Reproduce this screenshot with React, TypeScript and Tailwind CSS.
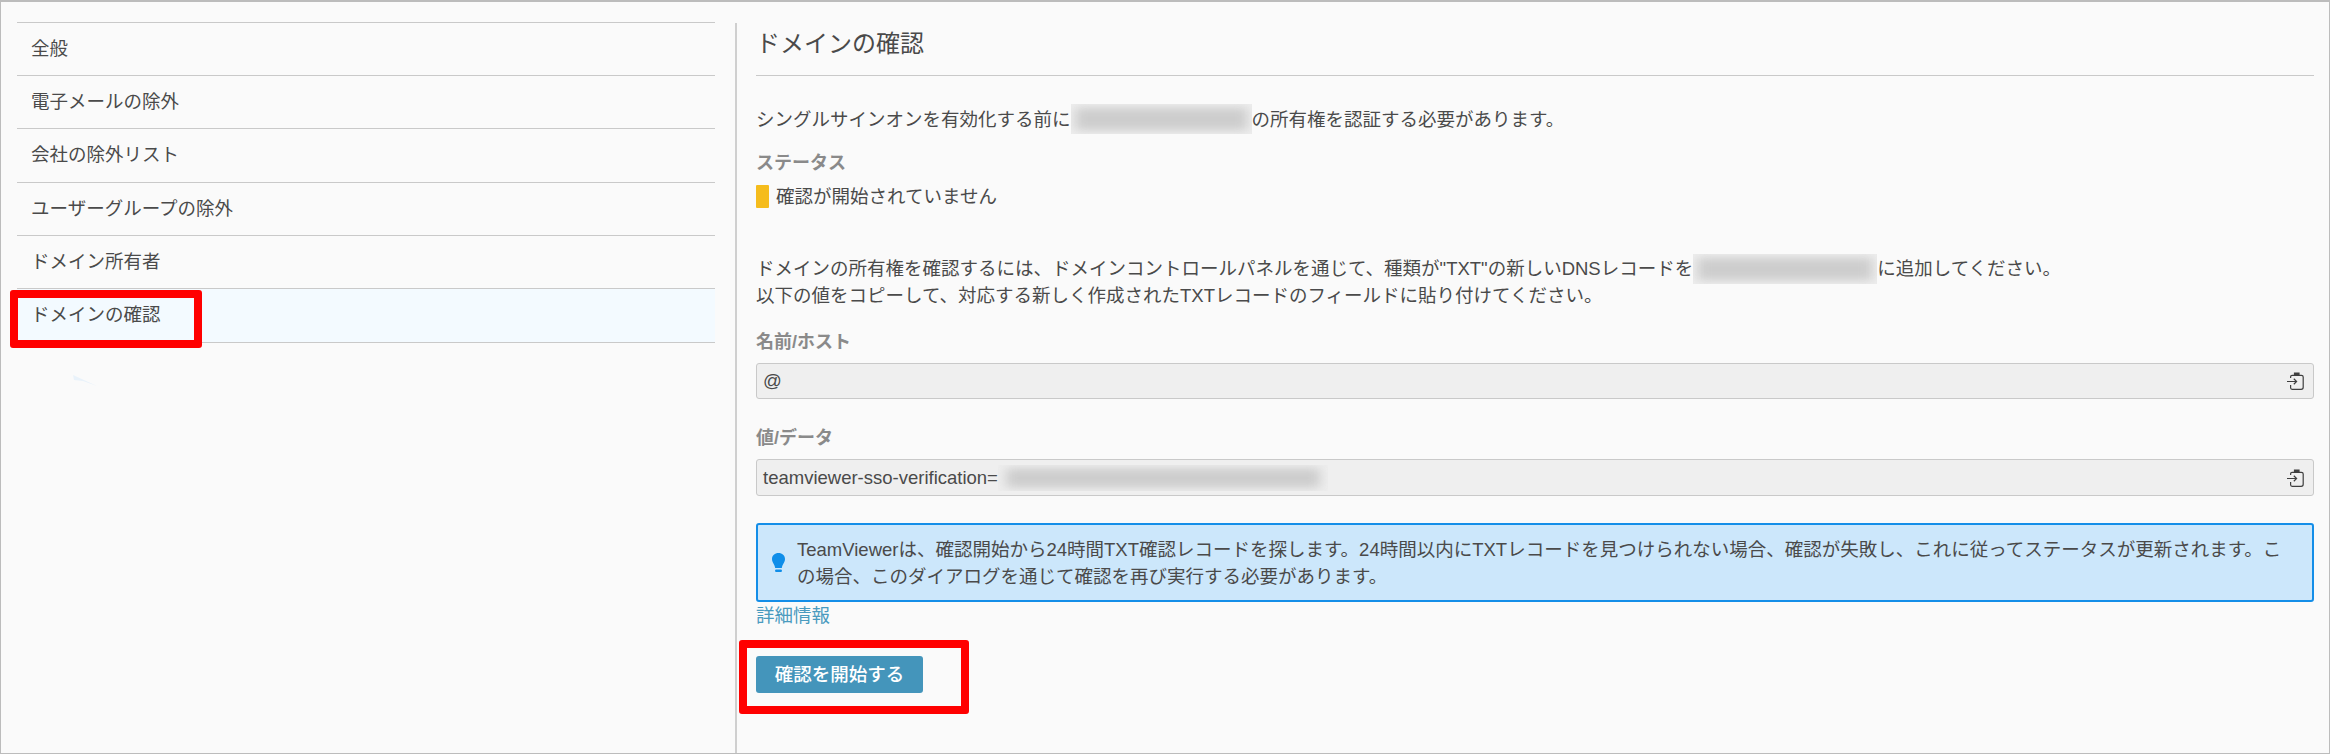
const NAV_ITEMS = [
  "全般",
  "電子メールの除外",
  "会社の除外リスト",
  "ユーザーグループの除外",
  "ドメイン所有者",
  "ドメインの確認",
];

function PasteIcon() {
  return (
    <svg width="17" height="18" viewBox="0 0 17 18" fill="none" stroke="#3f3f3f" strokeWidth="1.2">
      <path d="M3.600 6V4.800A1.500 1.500 0 0 1 5.100 3.300H14.400A1.800 1.800 0 0 1 16.200 5.100V15.300A2 2 0 0 1 14.200 17.300H5.100A1.500 1.500 0 0 1 3.600 15.800V13" />
      <path d="M7.500 3.300V1h4.500v2.300" fill="#3f3f3f" />
      <path d="M0 9.500H9.500M6.800 6.800l2.800 2.700-2.800 2.700" />
    </svg>
  );
}

function BulbIcon() {
  return (
    <svg width="13" height="19" viewBox="0 0 13 19" fill="#0f8ee9">
      <path d="M6.500 0C2.900 0 0 2.500 0 6c0 3.300 2.500 5 3.200 9h6.600c0.700-4 3.200-5.700 3.200-9C13 2.500 10.100 0 6.500 0z" />
      <rect x="3" y="16.500" width="7" height="2.500" rx="1.200" />
    </svg>
  );
}

function Blurred({ className }: { className: string }) {
  return (
    <span className={`inline-block overflow-hidden bg-[#eeeeee] align-middle ${className}`}>
      <span className="block h-full w-full scale-x-95 scale-y-75 bg-[#cdcdcd] blur-[6px]" />
    </span>
  );
}

function ReadonlyField({ height, children }: { height: string; children: React.ReactNode }) {
  return (
    <div className={`mt-[7px] flex items-center justify-between rounded-[3px] border border-[#c9c9c9] bg-[#efefef] pl-[6px] pr-[9px] text-[#4a4a4a] ${height}`}>
      <div className="flex items-center">{children}</div>
      <PasteIcon />
    </div>
  );
}

function FieldLabel({ className, children }: { className: string; children: React.ReactNode }) {
  return <div className={`text-[18px] leading-[27px] font-bold text-[#8a8a8a] ${className}`}>{children}</div>;
}

export default function App() {
  return (
    <div
      className="relative flex h-[754px] w-[2330px] overflow-hidden border border-t-2 border-[#bcbcbc] bg-[#fafafa] text-[18.5px] text-[#4a4a4a]"
      style={{ fontFamily: '"Liberation Sans", "Noto Sans CJK JP", sans-serif' }}
    >
      <aside className="w-[734px] shrink-0 pt-[20px] pl-[16px] pr-[20px]">
        {NAV_ITEMS.map((item, i) => (
          <div
            key={item}
            className={
              i === 5
                ? "h-[55px] border-y border-[#c9c9c9] bg-[#f3faff] pl-[14px] pt-[12px] leading-[27px]"
                : "h-[53.200px] border-t border-[#c9c9c9] pl-[14px] pt-[12px] leading-[27px]"
            }
          >
            {item}
          </div>
        ))}
        <svg className="mt-[32px] ml-[56px]" width="26" height="12" viewBox="0 0 26 12" fill="#e9f2fa">
          <path d="M0 0 L24 11 L10 6 L1 5 Z" />
        </svg>
      </aside>

      <main className="mt-[21px] min-w-0 flex-1 border-l-2 border-[#cfcfcf] pl-[19px] pr-[15px]">
        <h1 className="flex h-[53px] items-center border-b border-[#c9c9c9] pb-[10px] text-[24px] font-normal">
          ドメインの確認
        </h1>

        <p className="mt-[28px] flex h-[30px] items-center leading-[27px]">
          シングルサインオンを有効化する前に
          <Blurred className="h-[30px] w-[181px]" />
          の所有権を認証する必要があります。
        </p>

        <FieldLabel className="mt-[16px]">ステータス</FieldLabel>
        <div className="mt-[8px] flex h-[23px] items-center gap-[7px]">
          <span className="h-[23px] w-[13px] rounded-[1px] bg-[#f5bc1c]" />
          確認が開始されていません
        </div>

        <div className="mt-[47px] leading-[27px]">
          <div className="flex h-[27px] items-center">
            ドメインの所有権を確認するには、ドメインコントロールパネルを通じて、種類が"TXT"の新しいDNSレコードを
            <Blurred className="h-[30px] w-[184px]" />
            に追加してください。
          </div>
          <div>以下の値をコピーして、対応する新しく作成されたTXTレコードのフィールドに貼り付けてください。</div>
        </div>

        <FieldLabel className="mt-[20px]">名前/ホスト</FieldLabel>
        <ReadonlyField height="h-[36px]">@</ReadonlyField>

        <FieldLabel className="mt-[26px]">値/データ</FieldLabel>
        <ReadonlyField height="h-[37px]">
          teamviewer-sso-verification=
          <Blurred className="h-[26px] w-[330px]" />
        </ReadonlyField>

        <div className="mt-[27px] flex h-[79px] items-center gap-[12px] rounded-[3px] border-2 border-[#148ee8] bg-[#cce7fb] pl-[14px] pr-[20px] leading-[27px]">
          <span className="shrink-0">
            <BulbIcon />
          </span>
          <p>
            TeamViewerは、確認開始から24時間TXT確認レコードを探します。24時間以内にTXTレコードを見つけられない場合、確認が失敗し、これに従ってステータスが更新されます。この場合、このダイアログを通じて確認を再び実行する必要があります。
          </p>
        </div>

        <a className="block leading-[27px] text-[#4a9bbf]">詳細情報</a>

        <button className="mt-[27px] flex h-[37px] w-[167px] items-center justify-center rounded-[3px] bg-[#4495bb] font-medium text-white">
          確認を開始する
        </button>
      </main>

      <div className="absolute top-[288px] left-[9px] h-[58px] w-[192px] rounded-[3px] border-8 border-[#ff0000]" />
      <div className="absolute top-[638px] left-[738px] h-[74px] w-[230px] rounded-[3px] border-8 border-[#ff0000]" />
    </div>
  );
}
